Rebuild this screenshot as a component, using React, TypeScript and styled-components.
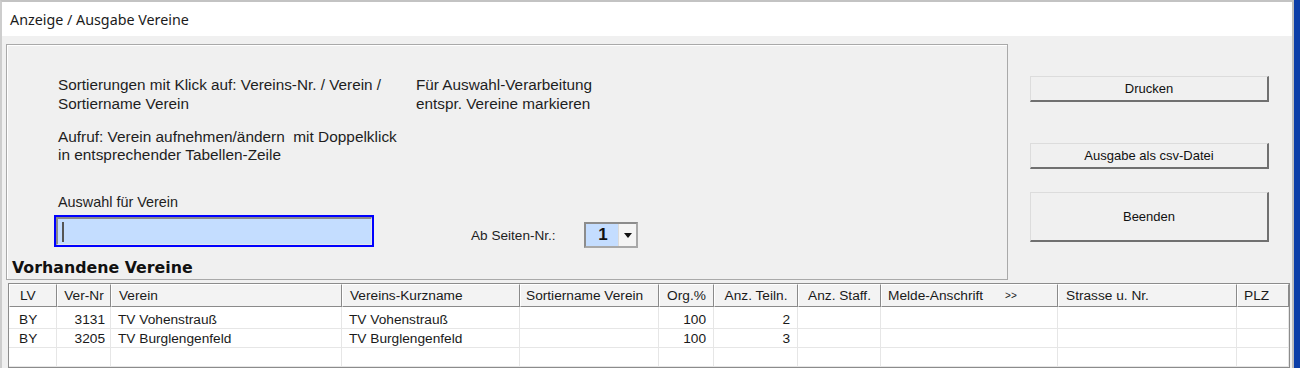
import styled, { createGlobalStyle } from 'styled-components'

const GlobalStyle = createGlobalStyle`
  html, body {
    margin: 0;
    padding: 0;
  }
  body {
    background: #0c3ea8;
    font-family: 'Liberation Sans', Arial, sans-serif;
    overflow: hidden;
  }
`

type Align = 'left' | 'center' | 'right'

interface Column {
  title: string
  width: number
  head: Align
  body: Align
  pad: number
  extra?: string
}

const columns: Column[] = [
  { title: 'LV', width: 48, head: 'left', body: 'left', pad: 10 },
  { title: 'Ver-Nr', width: 54, head: 'center', body: 'right', pad: 5 },
  { title: 'Verein', width: 231, head: 'left', body: 'left', pad: 7 },
  { title: 'Vereins-Kurzname', width: 178, head: 'left', body: 'left', pad: 7 },
  { title: 'Sortiername Verein', width: 139, head: 'left', body: 'left', pad: 5 },
  { title: 'Org.%', width: 55, head: 'center', body: 'right', pad: 7 },
  { title: 'Anz. Teiln.', width: 84, head: 'center', body: 'right', pad: 7 },
  { title: 'Anz. Staff.', width: 83, head: 'center', body: 'right', pad: 7 },
  { title: 'Melde-Anschrift', width: 177, head: 'left', body: 'left', pad: 6, extra: '>>' },
  { title: 'Strasse u. Nr.', width: 179, head: 'left', body: 'left', pad: 7 },
  { title: 'PLZ', width: 52, head: 'left', body: 'left', pad: 6 },
]

const rows: string[][] = [
  ['BY', '3131', 'TV Vohenstrauß', 'TV Vohenstrauß', '', '100', '2', '', '', '', ''],
  ['BY', '3205', 'TV Burglengenfeld', 'TV Burglengenfeld', '', '100', '3', '', '', '', ''],
  ['', '', '', '', '', '', '', '', '', '', ''],
]

const gridCols = columns.map((c) => `${c.width}px`).join(' ')

const App = () => {
  return (
    <>
      <GlobalStyle />
      <Window>
        <TitleBar>Anzeige / Ausgabe Vereine</TitleBar>
        <Client>
          <TopRow>
            <Panel>
              <InfoRow>
                <InfoCol $width={358}>
                  Sortierungen mit Klick auf: Vereins-Nr. / Verein /
                  <br />
                  Sortiername Verein
                </InfoCol>
                <InfoCol>
                  Für Auswahl-Verarbeitung
                  <br />
                  entspr. Vereine markieren
                </InfoCol>
              </InfoRow>
              <Note>
                Aufruf: Verein aufnehmen/ändern&nbsp; mit Doppelklick
                <br />
                in entsprechender Tabellen-Zeile
              </Note>
              <FieldLabel>Auswahl für Verein</FieldLabel>
              <SearchRow>
                <SearchBox>
                  <SearchInner>
                    <Caret />
                  </SearchInner>
                </SearchBox>
                <PageLabel>Ab Seiten-Nr.:</PageLabel>
                <Combo>
                  <ComboValue>1</ComboValue>
                  <DropButton>
                    <Arrow />
                  </DropButton>
                </Combo>
              </SearchRow>
              <Heading>Vorhandene Vereine</Heading>
            </Panel>
            <ButtonColumn>
              <Button $h={26}>Drucken</Button>
              <Button $h={26} $gap={41}>
                Ausgabe als csv-Datei
              </Button>
              <Button $h={50} $gap={23}>
                Beenden
              </Button>
            </ButtonColumn>
          </TopRow>
          <Table>
            <Grid>
              {columns.map((c) => (
                <HeadCell key={c.title} $align={c.head} $pad={c.pad}>
                  {c.title}
                  {c.extra && <HeadExtra>{c.extra}</HeadExtra>}
                </HeadCell>
              ))}
            </Grid>
            <Grid>
              {rows.map((r, ri) =>
                r.map((v, ci) => (
                  <Cell
                    key={`${ri}-${ci}`}
                    $align={columns[ci].body}
                    $pad={columns[ci].pad}
                    $first={ri === 0}
                  >
                    {v}
                  </Cell>
                ))
              )}
            </Grid>
          </Table>
        </Client>
      </Window>
    </>
  )
}

export default App

const Window = styled.div`
  width: 1294px;
  height: 368px;
  box-sizing: border-box;
  border-top: 2px solid #c3c3c3;
  border-left: 2px solid #cdcdcd;
  border-right: 2px solid #bdbdbd;
  background: #f0f0f0;
  display: flex;
  flex-direction: column;
  overflow: hidden;
`

const TitleBar = styled.div`
  height: 34px;
  background: #ffffff;
  display: flex;
  align-items: center;
  padding-left: 8px;
  font-family: 'Noto Sans', 'Open Sans', sans-serif;
  font-size: 14.3px;
  color: #1b1b1b;
`

const Client = styled.div`
  flex: 1;
  display: flex;
  flex-direction: column;
  padding: 8px 0 0 4px;
  min-height: 0;
`

const TopRow = styled.div`
  display: flex;
  align-items: flex-start;
`

const Panel = styled.div`
  width: 1002px;
  height: 236px;
  box-sizing: border-box;
  border: 1px solid #a9a9a9;
  box-shadow: inset 1px 1px 0 #ffffff;
  padding-top: 30px;
  display: flex;
  flex-direction: column;
  font-size: 14px;
  line-height: 18px;
  color: #1e1e1e;
`

const InfoRow = styled.div`
  display: flex;
  padding-left: 51px;
  font-size: 15.3px;
  line-height: 19px;
`

const InfoCol = styled.div<{ $width?: number }>`
  width: ${(p) => (p.$width ? `${p.$width}px` : 'auto')};
`

const Note = styled.div`
  margin-top: 15px;
  padding-left: 51px;
  font-size: 15.4px;
  line-height: 18px;
`

const FieldLabel = styled.div`
  margin-top: 29px;
  padding-left: 51px;
  font-size: 14.4px;
`

const SearchRow = styled.div`
  display: flex;
  align-items: flex-end;
  margin-top: 4px;
  padding-left: 47px;
`

const SearchBox = styled.div`
  width: 320px;
  height: 32px;
  box-sizing: border-box;
  border: 2px solid #0000ff;
  display: flex;
`

const SearchInner = styled.div`
  flex: 1;
  display: flex;
  align-items: center;
  background: #c4ddff;
  border-top: 2px solid #8a8a8a;
  border-left: 2px solid #8a8a8a;
  border-right: 1px solid #e6e6e6;
  border-bottom: 1px solid #e6e6e6;
`

const Caret = styled.div`
  width: 2px;
  height: 20px;
  margin-left: 4px;
  background: #555555;
`

const PageLabel = styled.div`
  width: 113px;
  margin-left: 97px;
  margin-bottom: 2px;
  font-size: 13.6px;
`

const Combo = styled.div`
  width: 54px;
  height: 26px;
  box-sizing: border-box;
  border: 2px solid #8c8c8c;
  border-right-color: #a8a8a8;
  border-bottom-color: #a8a8a8;
  display: flex;
  margin-bottom: -1px;
`

const ComboValue = styled.div`
  flex: 1;
  background: #c4ddff;
  display: flex;
  align-items: center;
  justify-content: center;
  padding-left: 2px;
  font-size: 17px;
  font-weight: bold;
  color: #111;
`

const DropButton = styled.div`
  width: 17px;
  background: #f4f4f4;
  border-left: 1px solid #dadada;
  display: flex;
  align-items: center;
  justify-content: center;
`

const Arrow = styled.div`
  width: 0;
  height: 0;
  border-left: 4px solid transparent;
  border-right: 4px solid transparent;
  border-top: 5px solid #111;
`

const Heading = styled.div`
  margin-top: 11px;
  padding-left: 5px;
  font-family: 'DejaVu Sans', Verdana, sans-serif;
  font-weight: bold;
  font-size: 15.8px;
  line-height: 20px;
  color: #111;
`

const ButtonColumn = styled.div`
  display: flex;
  flex-direction: column;
  margin-left: 22px;
  padding-top: 32px;
`

const Button = styled.button<{ $h: number; $gap?: number }>`
  width: 239px;
  height: ${(p) => p.$h}px;
  margin-top: ${(p) => p.$gap ?? 0}px;
  box-sizing: border-box;
  padding: 0;
  background: #f0f0f0;
  border: none;
  border-top: 1px solid #dcdcdc;
  border-left: 1px solid #dcdcdc;
  border-right: 2px solid #707070;
  border-bottom: 2px solid #707070;
  font-family: 'Liberation Sans', Arial, sans-serif;
  font-size: 13px;
  color: #111;
`

const Table = styled.div`
  flex: 1;
  margin: 3px 0 0 2px;
  width: 1282px;
  box-sizing: border-box;
  border: 1px solid #8c8c8c;
  background: #ffffff;
  font-size: 13.7px;
  color: #1a1a1a;
`

const Grid = styled.div`
  display: grid;
  grid-template-columns: ${gridCols};
`

const HeadCell = styled.div<{ $align: Align; $pad: number }>`
  height: 23px;
  box-sizing: border-box;
  display: flex;
  align-items: center;
  justify-content: ${(p) =>
    p.$align === 'center' ? 'center' : p.$align === 'right' ? 'flex-end' : 'flex-start'};
  padding: 0 ${(p) => p.$pad}px;
  background: #f3f3f3;
  border-top: 1px solid #ffffff;
  border-left: 1px solid #ffffff;
  border-right: 1px solid #8a8a8a;
  border-bottom: 1px solid #8a8a8a;
  white-space: nowrap;
  overflow: hidden;
`

const HeadExtra = styled.span`
  margin-left: 22px;
  font-size: 10px;
`

const Cell = styled.div<{ $align: Align; $pad: number; $first: boolean }>`
  height: ${(p) => (p.$first ? 22 : 19)}px;
  box-sizing: border-box;
  padding: ${(p) => (p.$first ? 3 : 0)}px ${(p) => p.$pad}px 0;
  display: flex;
  align-items: center;
  justify-content: ${(p) =>
    p.$align === 'center' ? 'center' : p.$align === 'right' ? 'flex-end' : 'flex-start'};
  border-right: 1px solid #e6e6e6;
  border-bottom: 1px solid #e6e6e6;
  white-space: nowrap;
  overflow: hidden;
`
